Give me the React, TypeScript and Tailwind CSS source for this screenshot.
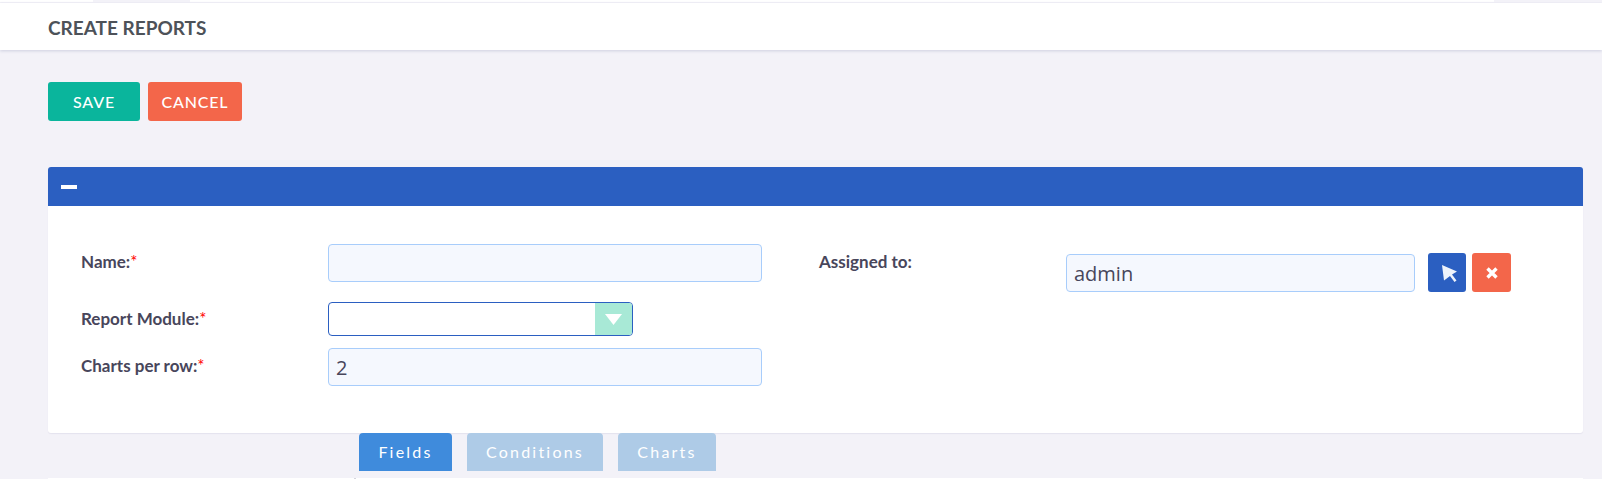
const Label = ({ text, required }: { text: string; required?: boolean }) => (
  <label className="block text-[17px] font-bold leading-5 text-[#48465b]">
    {text}
    {required && <span className="text-[#ff0000] font-normal">*</span>}
  </label>
)

const inputClass =
  "h-[38px] rounded-[4px] border border-[#a8cdfb] bg-[#f5f8fe] px-[7px] text-[20px] text-[#48465b] font-['Open_Sans',sans-serif] outline-none"

export default function App() {
  return (
    <div className="h-[479px] overflow-hidden bg-[#f3f2f8] font-['Lato',sans-serif]">
      {/* top strip */}
      <div className="flex h-[3px] bg-white border-b border-[#f3f2f8]">
        <div className="ml-[93px] w-[97px] bg-[#f3f2f8]" />
        <div className="ml-auto w-[108px] bg-[#f3f2f8]" />
      </div>

      <header className="flex h-[47px] items-center bg-white pl-12 pt-[3px] shadow-[0_1px_3px_rgba(60,70,130,0.2)]">
        <h1 className="text-[19px] font-bold text-[#4d5259]">CREATE REPORTS</h1>
      </header>

      <div className="flex gap-2 pl-12 pt-8">
        <button className="h-[39px] w-[92px] rounded-[3px] bg-[#0ab59c] text-[16px] font-medium tracking-[0.8px] text-white">SAVE</button>
        <button className="h-[39px] w-[94px] rounded-[3px] bg-[#f3664a] text-[16px] font-medium tracking-[0.8px] text-white">CANCEL</button>
      </div>

      <section className="mx-[19px] ml-12 mt-[46px] rounded-[3px] bg-white shadow-[0_1px_1px_rgba(60,70,130,0.08)]">
        <div className="flex h-[39px] items-center rounded-t-[3px] bg-[#2b5fc1] pl-[13px]">
          <div className="h-[4px] w-4 bg-white" />
        </div>
        <div className="flex h-[227px] pt-[38px]">
          <div className="w-[771px] shrink-0 pl-[33px]">
            <div className="flex h-[38px] items-start">
              <div className="w-[247px] pt-[8px]"><Label text="Name:" required /></div>
              <input className={`${inputClass} w-[434px]`} />
            </div>
            <div className="mt-5 flex h-[34px] items-start">
              <div className="w-[247px] pt-[7px]"><Label text="Report Module:" required /></div>
              <div className="flex h-[34px] w-[305px] overflow-hidden rounded-[4px] border border-[#2b5fc1] bg-white">
                <div className="grow" />
                <div className="flex w-[37px] items-center justify-center bg-[#a8e9d6]">
                  <svg width="17" height="11" viewBox="0 0 17 11"><path d="M0 0h17L8.5 11z" fill="#fff" /></svg>
                </div>
              </div>
            </div>
            <div className="mt-3 flex h-[38px] items-start">
              <div className="w-[247px] pt-[8px]"><Label text="Charts per row:" required /></div>
              <input className={`${inputClass} w-[434px]`} defaultValue="2" />
            </div>
          </div>
          <div className="flex items-start">
            <div className="w-[247px] pt-[8px]"><Label text="Assigned to:" /></div>
            <input className={`${inputClass} mt-[10px] w-[349px]`} defaultValue="admin" />
            <button className="ml-[13px] mt-[9px] flex h-[39px] w-[38px] items-center justify-center rounded-[3px] bg-[#2b5fc1]">
              <svg width="16" height="17" viewBox="0 0 16 17" className="ml-[6px] mt-[2px]">
                <path d="M0 0l15 6.5-5 3 4.500 6L12.500 17 8 11l-6 4.500z" fill="#eef3fb" />
              </svg>
            </button>
            <button className="ml-[6px] mt-[9px] flex h-[39px] w-[39px] items-center justify-center rounded-[3px] bg-[#f3664a]">
              <svg width="12" height="12" viewBox="0 0 12 12"><path d="M1.500 1.500l9 9M10.500 1.500l-9 9" stroke="#fff" strokeWidth="3.400" /></svg>
            </button>
          </div>
        </div>
      </section>

      <div className="flex pl-[359px]">
        <div className="flex h-[38px] w-[93px] items-center justify-center rounded-t-[4px] bg-[#3f8bdc] text-[16px] tracking-[2.2px] text-white">Fields</div>
        <div className="ml-[15px] flex h-[38px] w-[136px] items-center justify-center rounded-t-[4px] bg-[#aecbe7] text-[16px] tracking-[2.2px] text-white">Conditions</div>
        <div className="ml-[15px] flex h-[38px] w-[98px] items-center justify-center rounded-t-[4px] bg-[#aecbe7] text-[16px] tracking-[2.2px] text-white">Charts</div>
      </div>

      {/* top edge of the next panel, cut off by the window */}
      <div className="mx-[19px] ml-12 mt-[7px] h-[2px] bg-white pl-[306px]">
        <div className="h-[2px] w-[2px] bg-[#d5d5dd]" />
      </div>
    </div>
  )
}
